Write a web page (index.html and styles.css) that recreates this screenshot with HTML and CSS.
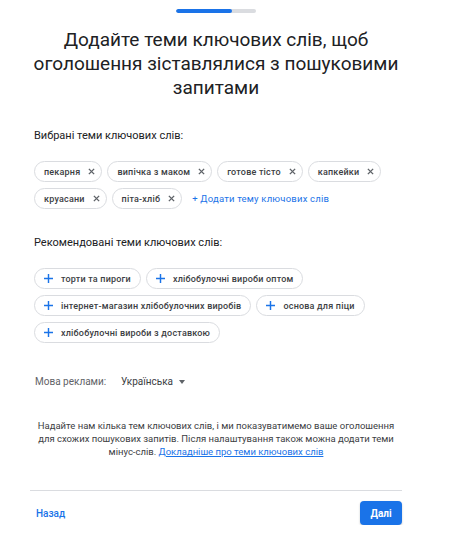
FILE: index.html
```html
<!DOCTYPE html>
<html lang="uk">
<head>
    <meta charset="UTF-8">
    <meta name="viewport" content="width=device-width, initial-scale=1.0">
    <title>Теми ключових слів</title>
    <link rel="stylesheet" href="styles.css">
</head>
<body>
    <div class="page">
        <div class="progress"><div class="progress-fill"></div></div>

        <h1 class="title">Додайте теми ключових слів, щоб оголошення зіставлялися з пошуковими запитами</h1>

        <section class="group">
            <h2 class="group-label">Вибрані теми ключових слів:</h2>
            <div class="chips">
                <span class="chip">пекарня <svg class="chip-x" viewBox="0 0 8 8"><path d="M1 1L7 7M7 1L1 7"/></svg></span>
                <span class="chip">випічка з маком <svg class="chip-x" viewBox="0 0 8 8"><path d="M1 1L7 7M7 1L1 7"/></svg></span>
                <span class="chip">готове тісто <svg class="chip-x" viewBox="0 0 8 8"><path d="M1 1L7 7M7 1L1 7"/></svg></span>
                <span class="chip">капкейки <svg class="chip-x" viewBox="0 0 8 8"><path d="M1 1L7 7M7 1L1 7"/></svg></span>
                <span class="chip">круасани <svg class="chip-x" viewBox="0 0 8 8"><path d="M1 1L7 7M7 1L1 7"/></svg></span>
                <span class="chip">піта-хліб <svg class="chip-x" viewBox="0 0 8 8"><path d="M1 1L7 7M7 1L1 7"/></svg></span>
                <a class="add-link" href="#">+ Додати тему ключових слів</a>
            </div>
        </section>

        <section class="group">
            <h2 class="group-label">Рекомендовані теми ключових слів:</h2>
            <div class="chips">
                <span class="chip chip-add"><svg class="chip-plus" viewBox="0 0 10 10"><path d="M5 0V10M0 5H10"/></svg> торти та пироги</span>
                <span class="chip chip-add"><svg class="chip-plus" viewBox="0 0 10 10"><path d="M5 0V10M0 5H10"/></svg> хлібобулочні вироби оптом</span>
                <span class="chip chip-add"><svg class="chip-plus" viewBox="0 0 10 10"><path d="M5 0V10M0 5H10"/></svg> інтернет-магазин хлібобулочних виробів</span>
                <span class="chip chip-add"><svg class="chip-plus" viewBox="0 0 10 10"><path d="M5 0V10M0 5H10"/></svg> основа для піци</span>
                <span class="chip chip-add"><svg class="chip-plus" viewBox="0 0 10 10"><path d="M5 0V10M0 5H10"/></svg> хлібобулочні вироби з доставкою</span>
            </div>
        </section>

        <div class="lang-row">
            <span class="lang-label">Мова реклами:</span>
            <span class="lang-select">Українська <span class="caret"></span></span>
        </div>

        <p class="hint">Надайте нам кілька тем ключових слів, і ми показуватимемо ваше оголошення для схожих пошукових запитів. Після налаштування також можна додати теми мінус-слів. <a href="#">Докладніше про теми ключових слів</a></p>

        <div class="footer">
            <a class="back" href="#">Назад</a>
            <button class="next" type="button">Далі</button>
        </div>
    </div>
</body>
</html>
```

FILE: styles.css
```css
body {
    margin: 0;
    background-color: #fff;
    font-family: Roboto, "Noto Sans", Arial, sans-serif;
    color: #202124;
}

.page {
    width: 372px;
    margin-left: 30px;
}

.progress {
    width: 80px;
    height: 4px;
    margin: 9px auto 0;
    border-radius: 2px;
    background-color: #dadce0;
    overflow: hidden;
}

.progress-fill {
    width: 56px;
    height: 100%;
    border-radius: 2px;
    background-color: #1a73e8;
}

.title {
    margin: 15px -4px 0;
    font-size: 19px;
    font-weight: 400;
    line-height: 24px;
    text-align: center;
    color: #202124;
}

.group {
    margin-top: 28px;
    padding-left: 4px;
}

.group + .group {
    margin-top: 26px;
}

.group-label {
    margin: 0 0 17px;
    font-size: 11px;
    font-weight: 400;
    line-height: 16px;
    color: #202124;
}

.chips {
    display: flex;
    flex-wrap: wrap;
    align-items: center;
    gap: 6px 5px;
}

.chip {
    display: inline-flex;
    align-items: center;
    gap: 8px;
    height: 21px;
    box-sizing: border-box;
    padding: 0 6px 0 9px;
    border: 1px solid #dadce0;
    border-radius: 11px;
    font-size: 9px;
    font-weight: 500;
    letter-spacing: 0.2px;
    color: #3c4043;
    white-space: nowrap;
}

.chip-add {
    padding: 0 9px 0 9px;
}

.chip-x {
    width: 7px;
    height: 7px;
    stroke: #5f6368;
    stroke-width: 1.6;
    fill: none;
}

.chip-plus {
    width: 9px;
    height: 9px;
    stroke: #1a73e8;
    stroke-width: 1.6;
    fill: none;
}

.add-link {
    margin-left: 5px;
    font-size: 9.5px;
    font-weight: 400;
    letter-spacing: 0.2px;
    color: #1a73e8;
    text-decoration: none;
}

.lang-row {
    display: flex;
    align-items: center;
    margin-top: 31px;
    padding-left: 5px;
    font-size: 10px;
    line-height: 16px;
}

.lang-label {
    width: 86px;
    color: #5f6368;
}

.lang-select {
    display: inline-flex;
    align-items: center;
    gap: 6px;
    color: #3c4043;
}

.caret {
    width: 0;
    height: 0;
    border-left: 3px solid transparent;
    border-right: 3px solid transparent;
    border-top: 4px solid #5f6368;
}

.hint {
    margin: 29px 0 0;
    font-size: 9.5px;
    line-height: 13px;
    text-align: center;
    color: #3c4043;
}

.hint a {
    color: #1a73e8;
}

.footer {
    display: flex;
    justify-content: space-between;
    align-items: center;
    margin-top: 32px;
    padding-top: 10px;
    border-top: 1px solid #dadce0;
}

.back {
    margin-left: 6px;
    font-size: 10px;
    font-weight: 500;
    color: #1a73e8;
    text-decoration: none;
}

.next {
    width: 42px;
    height: 24px;
    border: none;
    border-radius: 4px;
    background-color: #1a73e8;
    box-shadow: 0 1px 2px rgba(60, 64, 67, 0.3);
    font-family: inherit;
    font-size: 10px;
    font-weight: 700;
    color: #fff;
    cursor: pointer;
}
```
